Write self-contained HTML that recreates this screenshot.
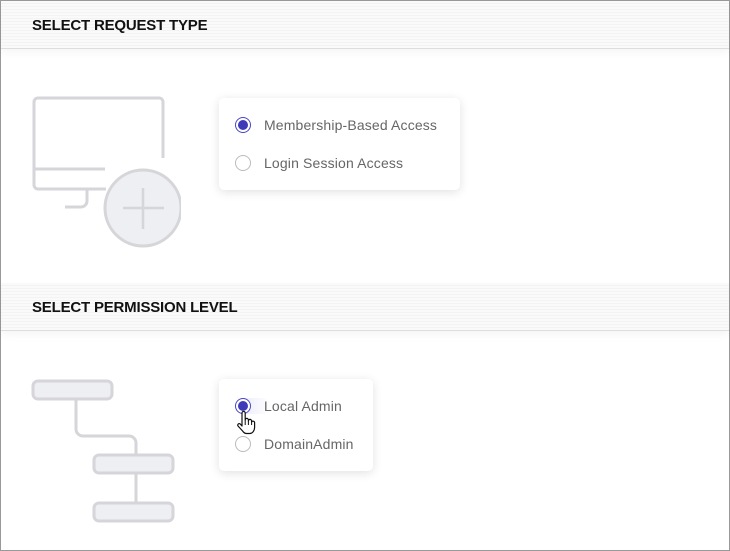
<!DOCTYPE html>
<html><head><style>
*{margin:0;padding:0;box-sizing:border-box}
body{width:730px;height:551px;background:#fff;font-family:"Liberation Sans",sans-serif;position:relative;overflow:hidden}
.frame{position:absolute;left:0;top:0;width:730px;height:551px;border:1px solid #999}
.hdr{position:absolute;left:1px;width:728px;height:48px;background:repeating-linear-gradient(#fafafa 0 2px,#f3f3f3 2px 3px);border-bottom:1px solid #ddd;box-shadow:0 4px 8px rgba(0,0,0,.04)}
.hdr span{position:absolute;left:31px;top:16px;font-size:15px;font-weight:bold;color:#111;letter-spacing:-.2px}
.card{position:absolute;background:#fff;border-radius:5px;box-shadow:0 2px 10px rgba(0,0,0,.12)}
.r{position:absolute;left:16px;width:16px;height:16px;border-radius:50%;border:1px solid #bbb;background:#fff}
.r.on{border:1px solid #4a45c9;}
.r.on:after{content:"";position:absolute;left:2px;top:2px;width:10px;height:10px;border-radius:50%;background:#3f3ab8}
.t{position:absolute;left:45px;font-size:14px;color:#666;letter-spacing:.15px}
</style></head><body>
<div class="frame"></div>
<div class="hdr" style="top:1px"><span>SELECT REQUEST TYPE</span></div>
<div class="hdr" style="top:283px"><span>SELECT PERMISSION LEVEL</span></div>
<svg width="730" height="551" style="position:absolute;left:0;top:0">
<g fill="none" stroke="#d6d6da" stroke-width="3">
<path d="M105 169H35M163 158V102a4 4 0 0 0-4-4H38a4 4 0 0 0-4 4v83a4 4 0 0 0 4 4h68"/>
<path d="M87 189v12a6 6 0 0 1-6 6H65"/>
</g>
<clipPath id="c"><rect x="0" y="0" width="181" height="248"/></clipPath>
<g clip-path="url(#c)"><circle cx="143" cy="208" r="38" fill="#eeeff3" stroke="#d6d6da" stroke-width="3"/>
<path d="M143 188v41M123 208h41" stroke="#d6d6da" stroke-width="2.5"/></g>
<g fill="#eeeff3" stroke="#d6d6da" stroke-width="3">
<rect x="33" y="381" width="79" height="18" rx="5"/>
<rect x="94" y="455" width="79" height="18" rx="5"/>
<rect x="94" y="503" width="79" height="18" rx="5"/>
</g>
<path d="M76 399v30a7 7 0 0 0 7 7h46a7 7 0 0 1 7 7v12M136 473v30" fill="none" stroke="#d6d6da" stroke-width="3"/>
</svg>
<div class="card" style="left:219px;top:98px;width:241px;height:92px">
<div class="r on" style="top:19px"></div><div class="t" style="top:19px">Membership-Based Access</div>
<div class="r" style="top:57px"></div><div class="t" style="top:57px">Login Session Access</div>
</div>
<div class="card" style="left:219px;top:379px;width:154px;height:92px">
<div style="position:absolute;left:16px;top:19px;width:36px;height:16px;border-radius:8px;background:linear-gradient(90deg,#e8e7f8,#fff)"></div>
<div class="r on" style="top:19px"></div><div class="t" style="top:19px">Local Admin</div>
<div class="r" style="top:57px"></div><div class="t" style="top:57px">DomainAdmin</div>
</div>
<svg width="20" height="24" style="position:absolute;left:236px;top:411px" viewBox="0 0 20 24">
<path d="M6 2a1.6 1.6 0 0 1 3.2 0v7a1.6 1.6 0 0 1 3.2 0v1a1.6 1.6 0 0 1 3.2 0v1a1.6 1.6 0 0 1 3 .5v5c0 3-2 6-5 6h-3c-2 0-3-1-4-2.5L2 15a1.5 1.5 0 0 1 2.5-1.7L6 15z" fill="#fff" stroke="#111" stroke-width="1.2" stroke-linejoin="round"/>
<path d="M9.2 9v5M12.4 10v4M15.6 11v3" stroke="#111" stroke-width="1"/>
</svg>
</body></html>
